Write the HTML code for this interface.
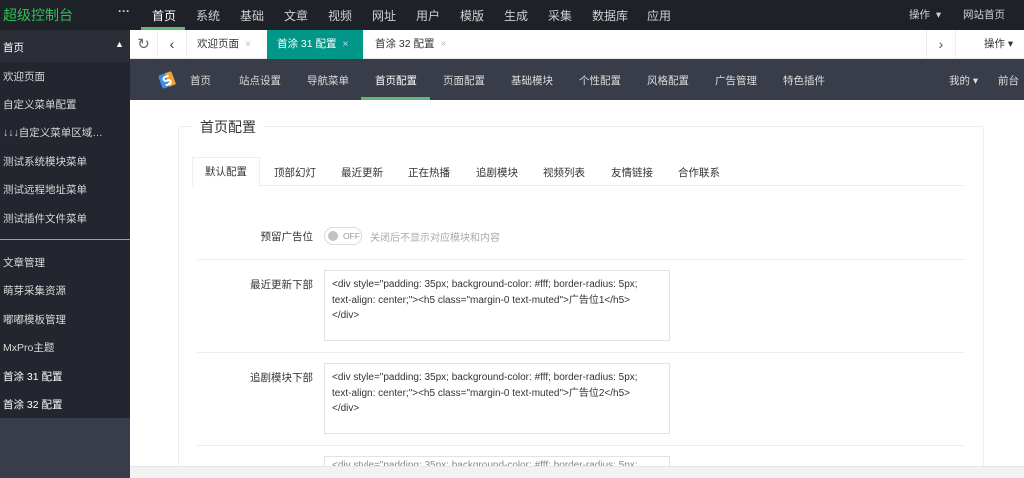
<!DOCTYPE html>
<html><head><meta charset="utf-8"><style>
*{margin:0;padding:0;box-sizing:border-box}
html,body{width:1024px;height:478px;overflow:hidden}
body{font-family:"Liberation Sans","Noto Sans CJK SC",sans-serif;font-size:11px;background:#fff}
#w{position:relative;width:1024px;height:478px;overflow:hidden}
.top{position:absolute;left:0;top:0;width:1024px;height:30px;background:#1f2128;color:#d0d0d0}
.top span{position:absolute;top:7px;font-size:12px}
.side{position:absolute;left:0;top:30px;width:130px;height:448px;background:#393d49}
.sidein{position:absolute;left:0;top:0;width:130px;height:388px;background:#23262e}
.side .t{position:absolute;left:3px;font-size:10.5px;color:#d8d8d8}
.tabs{position:absolute;left:130px;top:30px;width:894px;height:29px;background:#fff;border-bottom:1px solid #e6e6e6}
.tabs div{position:absolute;top:0;height:29px;line-height:29px;font-size:10.5px}
.sub{position:absolute;left:130px;top:59px;width:894px;height:41px;background:#393d49;color:#ddd}
.sub span{position:absolute;top:14px;font-size:10.5px}
.card{position:absolute;left:178px;top:126px;width:806px;height:340px;border:1px solid #eee;border-bottom:none;border-radius:3px 3px 0 0}
.lab{position:absolute;font-size:10.5px;color:#333;text-align:right;width:120px;left:193px}
.ta{position:absolute;left:324px;width:346px;height:71px;border:1px solid #e2e2e2;font-size:10px;line-height:15.5px;padding:6px 7px;color:#333;background:#fff;overflow:hidden}
.hr{position:absolute;left:197px;width:768px;height:1px;background:#eee}
.tb{position:absolute;top:165px;font-size:10.5px;color:#333}
</style></head><body><div id="w">
<div class="top">
<span style="left:3px;top:5px;color:#2fbf58;font-size:14px">超级控制台</span>
<span style="left:118px;top:4px;font-weight:bold">···</span>
<span style="left:152px;color:#fff">首页</span>
<div style="position:absolute;left:141px;top:27px;width:44px;height:3px;background:#5fb878"></div>
<span style="left:196px">系统</span><span style="left:240px">基础</span><span style="left:284px">文章</span><span style="left:328px">视频</span><span style="left:372px">网址</span><span style="left:416px">用户</span><span style="left:460px">模版</span><span style="left:504px">生成</span><span style="left:548px">采集</span><span style="left:592px">数据库</span><span style="left:647px">应用</span>
<span style="left:909px;font-size:10.5px">操作 &nbsp;▾</span><span style="left:963px;font-size:10.5px">网站首页</span>
</div>
<div class="side"><div class="sidein"></div>
<div style="position:absolute;left:0;top:0;width:130px;height:32px;background:#2b2e36"></div>
<div class="t" style="top:10px;color:#fff">首页</div><div class="t" style="left:115px;top:9px;color:#fff;font-size:9px">▲</div>
<div class="t" style="top:39px">欢迎页面</div><div class="t" style="top:67px">自定义菜单配置</div><div class="t" style="top:95px">↓↓↓自定义菜单区域…</div>
<div class="t" style="top:124px">测试系统模块菜单</div><div class="t" style="top:152px">测试远程地址菜单</div><div class="t" style="top:181px">测试插件文件菜单</div>
<div style="position:absolute;left:0;top:209px;width:130px;height:1px;background:#a0a0a0"></div>
<div class="t" style="top:225px">文章管理</div><div class="t" style="top:253px">萌芽采集资源</div><div class="t" style="top:282px">嘟嘟模板管理</div><div class="t" style="top:310px">MxPro主题</div>
<div class="t" style="top:339px;color:#fff">首涂 31 配置</div><div class="t" style="top:367px;color:#fff">首涂 32 配置</div>
</div>
<div class="tabs">
<div style="left:0;width:28px;border-right:1px solid #eee;text-align:center;font-size:15px;color:#666">↻</div>
<div style="left:28px;width:29px;border-right:1px solid #eee;text-align:center;font-size:14px;color:#333">‹</div>
<div style="left:67px;color:#333">欢迎页面 &nbsp;<span style="color:#bbb">×</span></div>
<div style="left:137px;width:96px;background:#009688;color:#fff;padding-left:10px">首涂 31 配置 &nbsp;<span style="color:#bde">×</span></div>
<div style="left:245px;color:#333">首涂 32 配置 &nbsp;<span style="color:#bbb">×</span></div>
<div style="left:796px;width:29px;border-left:1px solid #eee;text-align:center;font-size:14px;color:#555">›</div>
<div style="left:825px;width:69px;border-left:1px solid #eee;padding-left:28px;color:#333">操作 ▾</div>
</div>
<div class="sub">
<svg style="position:absolute;left:27px;top:11px" width="20" height="20" viewBox="0 0 20 20"><g transform="rotate(-20 10 10)"><rect x="3" y="3" width="14" height="14" rx="2" fill="#3a8ee6"/><path d="M10 3h5a2 2 0 0 1 2 2v12h-7z" fill="#f0a030"/><path d="M13 6.5h-4a2 2 0 0 0 0 4h2a2 2 0 0 1 0 4h-4" stroke="#fff" stroke-width="2" fill="none"/></g></svg>
<span style="left:60px">首页</span><span style="left:109px">站点设置</span><span style="left:177px">导航菜单</span><span style="left:245px;color:#fff">首页配置</span>
<div style="position:absolute;left:231px;top:38px;width:69px;height:3px;background:#5fb878"></div>
<span style="left:313px">页面配置</span><span style="left:381px">基础模块</span><span style="left:449px">个性配置</span><span style="left:517px">风格配置</span><span style="left:585px">广告管理</span><span style="left:653px">特色插件</span>
<span style="left:819px">我的 ▾</span><span style="left:868px">前台</span>
</div>
<div class="card"></div>
<div style="position:absolute;left:193px;top:117px;padding:0 7px;background:#fff;font-size:14px;color:#333">首页配置</div>
<div style="position:absolute;left:192px;top:185px;width:773px;height:1px;background:#eee"></div>
<div style="position:absolute;left:192px;top:157px;width:68px;height:29px;border:1px solid #eee;border-bottom:none;background:#fff;text-align:center;line-height:28px;font-size:10.5px;color:#333">默认配置</div>
<div class="tb" style="left:274px">顶部幻灯</div><div class="tb" style="left:341px">最近更新</div><div class="tb" style="left:408px">正在热播</div><div class="tb" style="left:476px">追剧模块</div><div class="tb" style="left:543px">视频列表</div><div class="tb" style="left:611px">友情链接</div><div class="tb" style="left:678px">合作联系</div>
<div class="lab" style="top:229px">预留广告位</div>
<div style="position:absolute;left:324px;top:227px;width:38px;height:18px;border:1px solid #ddd;border-radius:10px;font-size:8.5px;color:#999;line-height:16px;padding-left:18px">OFF<div style="position:absolute;left:3px;top:3px;width:10px;height:10px;border-radius:50%;background:#c2c2c2"></div></div>
<div style="position:absolute;left:370px;top:229px;font-size:10px;color:#aaa">关闭后不显示对应模块和内容</div>
<div class="hr" style="top:259px"></div>
<div class="lab" style="top:277px">最近更新下部</div>
<div class="ta" style="top:270px">&lt;div style="padding: 35px; background-color: #fff; border-radius: 5px;<br>text-align: center;"&gt;&lt;h5 class="margin-0 text-muted"&gt;广告位1&lt;/h5&gt;<br>&lt;/div&gt;</div>
<div class="hr" style="top:352px"></div>
<div class="lab" style="top:370px">追剧模块下部</div>
<div class="ta" style="top:363px">&lt;div style="padding: 35px; background-color: #fff; border-radius: 5px;<br>text-align: center;"&gt;&lt;h5 class="margin-0 text-muted"&gt;广告位2&lt;/h5&gt;<br>&lt;/div&gt;</div>
<div class="hr" style="top:445px"></div>
<div class="ta" style="top:456px;height:10px;border-bottom:none;padding-top:4px;line-height:10px;color:#888">&lt;div style="padding: 35px; background-color: #fff; border-radius: 5px;</div>
<div style="position:absolute;left:130px;top:466px;width:894px;height:12px;background:#f2f2f2;border-top:1px solid #e6e6e6"></div>
</div></body></html>
